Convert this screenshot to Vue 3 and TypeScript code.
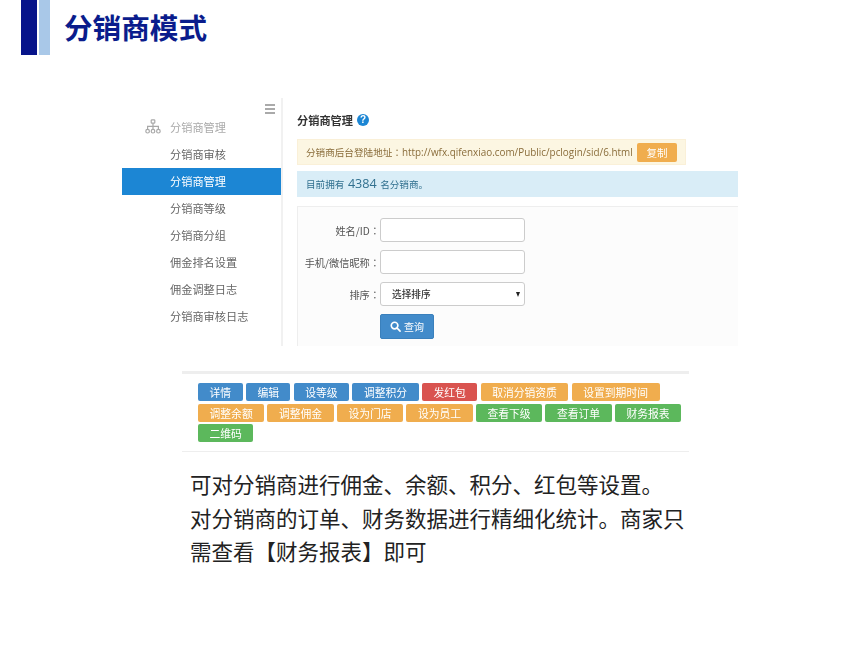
<script setup lang="ts">
const menu: { label: string; active?: boolean }[] = [
  { label: '分销商审核' },
  { label: '分销商管理', active: true },
  { label: '分销商等级' },
  { label: '分销商分组' },
  { label: '佣金排名设置' },
  { label: '佣金调整日志' },
  { label: '分销商审核日志' },
]
const actions: { label: string; tone: string }[] = [
  { label: '详情', tone: 'blue' },
  { label: '编辑', tone: 'blue' },
  { label: '设等级', tone: 'blue' },
  { label: '调整积分', tone: 'blue' },
  { label: '发红包', tone: 'red' },
  { label: '取消分销资质', tone: 'orange' },
  { label: '设置到期时间', tone: 'orange' },
  { label: '调整余额', tone: 'orange' },
  { label: '调整佣金', tone: 'orange' },
  { label: '设为门店', tone: 'orange' },
  { label: '设为员工', tone: 'orange' },
  { label: '查看下级', tone: 'green' },
  { label: '查看订单', tone: 'green' },
  { label: '财务报表', tone: 'green' },
  { label: '二维码', tone: 'green' },
]
</script>

<template>
  <div class="slide">
    <header class="head">
      <span class="bar dark"></span>
      <span class="bar light"></span>
      <h1 class="title">分销商模式</h1>
    </header>

    <section class="shot">
      <aside class="side">
        <div class="burger"><i></i><i></i><i></i></div>
        <div class="side-head">
          <svg class="org" viewBox="0 0 16 15" width="16" height="15" fill="none" stroke="#a8a8a8" stroke-width="1.2">
            <rect x="6.2" y="0.8" width="3.6" height="3.4" rx="0.8" />
            <path d="M8 4.2V10M2.6 10.4V7.4H13.4V10.4" />
            <circle cx="2.6" cy="12.2" r="1.8" />
            <circle cx="8" cy="12.2" r="1.8" />
            <circle cx="13.4" cy="12.2" r="1.8" />
          </svg>
          <span>分销商管理</span>
        </div>
        <div v-for="m in menu" :key="m.label" class="item" :class="{ active: m.active }">{{ m.label }}</div>
      </aside>

      <div class="main">
        <div class="main-title">
          <strong>分销商管理</strong>
          <span class="help">?</span>
        </div>
        <div class="notice">
          <span class="notice-text">分销商后台登陆地址<span class="colon">：</span><span class="url">http://wfx.qifenxiao.com/Public/pclogin/sid/6.html</span></span>
          <span class="copy">复制</span>
        </div>
        <div class="info">目前拥有<b>4384</b>名分销商。</div>
        <form class="filter">
          <label class="field"><span>姓名/ID<span class="colon">：</span></span><input type="text" /></label>
          <label class="field"><span>手机/微信昵称<span class="colon">：</span></span><input type="text" /></label>
          <label class="field">
            <span>排序<span class="colon">：</span></span>
            <div class="select-wrap">
              <select><option>选择排序</option></select>
            </div>
          </label>
          <div class="field">
            <span></span>
            <button type="button" class="search">
              <svg viewBox="0 0 12 12" width="11" height="11" fill="none" stroke="#fff" stroke-width="1.8" stroke-linecap="round">
                <circle cx="5" cy="5" r="3.6" />
                <path d="M7.8 7.8L11 11" />
              </svg>
              查询
            </button>
          </div>
        </form>
      </div>
    </section>

    <section class="actions">
      <span v-for="a in actions" :key="a.label" class="act" :class="a.tone">{{ a.label }}</span>
    </section>

    <p class="desc">可对分销商进行佣金、余额、积分、红包等设置。<br />对分销商的订单、财务数据进行精细化统计。商家只需查看【财务报表】即可</p>
  </div>
</template>

<style scoped>
.slide {
  width: 860px;
  height: 645px;
  overflow: hidden;
  background: #fff;
  font-family: "Noto Sans CJK SC", "Noto Sans", sans-serif;
}
.head {
  display: flex;
  align-items: center;
  height: 55px;
  padding-left: 21px;
}
.bar {
  height: 55px;
}
.bar.dark {
  width: 16px;
  background: #07148a;
  margin-right: 2px;
}
.bar.light {
  width: 11px;
  background: #a9c8e8;
  margin-right: 14px;
}
.title {
  margin: 0 0 2px;
  font-size: 28.6px;
  line-height: 53px;
  font-weight: 700;
  color: #0a1c8c;
}
.shot {
  display: flex;
  width: 616px;
  height: 248px;
  margin: 43px 0 0 122px;
  filter: blur(0.4px);
}
.side {
  flex: none;
  width: 159px;
  border-right: 2px solid #f1f1f1;
  margin-right: -2px;
  font-size: 11.2px;
  color: #666;
}
.burger {
  display: flex;
  flex-direction: column;
  gap: 2px;
  width: 10px;
  height: 10px;
  margin: 6px 6px 0 auto;
}
.burger i {
  display: block;
  height: 2px;
  background: #aaa;
}
.side-head {
  display: flex;
  align-items: center;
  height: 27px;
  padding: 0 0 2px 23px;
  box-sizing: border-box;
  color: #aaa;
  gap: 9px;
}
.org {
  flex: none;
}
.item {
  height: 27px;
  line-height: 27px;
  padding-left: 48px;
}
.item.active {
  background: #1c86d4;
  color: #fff;
}
.main {
  flex: 1;
  min-width: 0;
  margin-left: 16px;
  font-size: 9.6px;
}
.main-title {
  display: flex;
  align-items: center;
  gap: 4px;
  box-sizing: border-box;
  height: 41px;
  padding-top: 2px;
  color: #333;
  font-size: 11.2px;
}
.help {
  width: 12px;
  height: 12px;
  border-radius: 50%;
  background: #1c86d4;
  color: #fff;
  font: 700 10px/12px "Liberation Sans", sans-serif;
  text-align: center;
}
.notice {
  display: flex;
  align-items: center;
  justify-content: space-between;
  box-sizing: border-box;
  width: 389px;
  height: 26px;
  padding: 0 8px;
  background: #fcf6e2;
  border: 1px solid #faf0d8;
  color: #8a6d3b;
}
.notice-text {
  white-space: nowrap;
}
.colon {
  font-family: "Noto Sans CJK TC", sans-serif;
}
.url {
  font-family: "Open Sans", sans-serif;
  font-size: 9.9px;
}
.copy {
  width: 40px;
  height: 19px;
  line-height: 19px;
  border-radius: 2px;
  background: #f0ad4e;
  color: #fff;
  text-align: center;
  font-size: 10.5px;
}
.info {
  height: 26px;
  line-height: 26px;
  margin-top: 6px;
  padding-left: 9px;
  background: #d9edf7;
  color: #31708f;
}
.info b {
  font-family: "Open Sans", sans-serif;
  font-size: 12.6px;
  font-weight: 400;
  margin: 0 3.5px;
}
.filter {
  box-sizing: border-box;
  height: 140px;
  margin-top: 9px;
  padding-top: 11px;
  border: 1px solid #eee;
  border-width: 1px 0 0 1px;
  background: #fcfcfc;
  display: flex;
  flex-direction: column;
  gap: 8px;
}
.field {
  display: flex;
  align-items: center;
  color: #555;
  font-size: 10.2px;
}
.field > span {
  flex: none;
  width: 82px;
  text-align: right;
}
.field input,
.field select {
  box-sizing: border-box;
  width: 145px;
  height: 24px;
  border: 1px solid #ccc;
  border-radius: 3px;
  background: #fff;
  outline: none;
  font-family: inherit;
  color: #333;
}
.field select {
  appearance: none;
  display: block;
  padding-left: 11px;
  font-size: 9.7px;
  font-weight: 500;
}
.select-wrap {
  position: relative;
  width: 145px;
  height: 24px;
}
.select-wrap::after {
  content: "";
  position: absolute;
  top: 10px;
  right: 5px;
  border-left: 2.5px solid transparent;
  border-right: 2.5px solid transparent;
  border-top: 5px solid #222;
  pointer-events: none;
}
.search {
  display: flex;
  align-items: center;
  justify-content: center;
  gap: 3px;
  width: 54px;
  height: 25px;
  padding: 0;
  border: 1px solid #3a80bc;
  border-radius: 2px;
  background: #428bca;
  color: #fff;
  font-family: inherit;
  font-size: 10px;
}
.actions {
  display: flex;
  flex-wrap: wrap;
  align-content: flex-start;
  gap: 2.5px 3.3px;
  box-sizing: border-box;
  width: 507px;
  height: 81px;
  margin: 25px 0 0 182px;
  padding: 9px 0 0 16px;
  border-top: 3px solid #eee;
  border-bottom: 1px solid #eee;
  filter: blur(0.4px);
}
.act {
  height: 18px;
  line-height: 18px;
  padding: 0 11.5px;
  border-radius: 2px;
  font-size: 10.8px;
  color: #fff;
}
.blue { background: #428bca; }
.red { background: #d9534f; }
.orange { background: #f0ad4e; }
.green { background: #5cb85c; }
.desc {
  width: 497px;
  margin: 15px 0 0 190px;
  font-size: 21.5px;
  line-height: 33.5px;
  color: #222;
}
</style>
